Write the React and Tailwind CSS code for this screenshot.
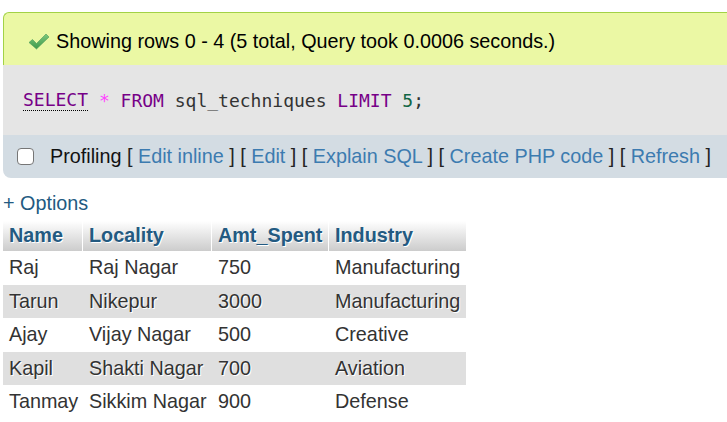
import { useState } from "react";

const rows = [
  ["Raj", "Raj Nagar", "750", "Manufacturing"],
  ["Tarun", "Nikepur", "3000", "Manufacturing"],
  ["Ajay", "Vijay Nagar", "500", "Creative"],
  ["Kapil", "Shakti Nagar", "700", "Aviation"],
  ["Tanmay", "Sikkim Nagar", "900", "Defense"],
];

const widths = ["w-[80px]", "w-[129px]", "w-[117px]", "w-[137px]"];

const CheckIcon = () => (
  <svg width="22" height="17" viewBox="0 0 22 17">
    <defs>
      <linearGradient id="ok" x1="0" y1="0" x2="0" y2="1">
        <stop offset="0" stopColor="#7cc87c" />
        <stop offset="1" stopColor="#3f9a4a" />
      </linearGradient>
    </defs>
    <path
      d="M1 9.5 L4.5 6.5 L8.5 10.5 L18 1 L21 4 L8.5 16 Z"
      fill="url(#ok)"
      stroke="#4a9a55"
      strokeWidth="0.6"
      strokeLinejoin="round"
    />
  </svg>
);

const Bracket = ({ children }) => (
  <span className="text-[#222]">{children}</span>
);

const Link = ({ children }) => (
  <a href="#" className="text-[#3c7bb0]">
    {children}
  </a>
);

export default function App() {
  const [profiling, setProfiling] = useState(false);

  return (
    <div className="w-[727px] h-[422px] overflow-hidden bg-white font-['Liberation_Sans',Arial,sans-serif] text-[19.8px] text-[#111]">
      <div className="pt-[12px] pl-[3px] w-[760px]">
        {/* Success message */}
        <div className="h-[53px] flex items-center pl-[24px] pt-[4px] bg-[#ebf8a4] border-t border-l border-[#a2d246] rounded-tl-[6px]">
          <CheckIcon />
          <span className="ml-[6px] leading-[22px] text-black">
            Showing rows 0 - 4 (5 total, Query took 0.0006 seconds.)
          </span>
        </div>

        {/* SQL box */}
        <div className="h-[70px] flex items-center pl-[20px] bg-[#e5e5e5] font-['DejaVu_Sans_Mono',monospace] text-[18px]">
          <span className="text-[#770088] border-b border-dotted border-black leading-[20px]">SELECT</span>
          <span className="whitespace-pre"> </span>
          <span className="text-[#ff44ff]">*</span>
          <span className="whitespace-pre"> </span>
          <span className="text-[#770088]">FROM</span>
          <span className="whitespace-pre text-[#333]"> sql_techniques </span>
          <span className="text-[#770088]">LIMIT</span>
          <span className="whitespace-pre"> </span>
          <span className="text-[#116644]">5</span>
          <span className="text-[#333]">;</span>
        </div>

        {/* Profiling bar */}
        <div className="h-[43px] flex items-center pl-[14px] bg-[#d3dce3] rounded-bl-[8px]">
          <input
            type="checkbox"
            checked={profiling}
            onChange={(e) => setProfiling(e.target.checked)}
            className="appearance-none w-[17px] h-[17px] rounded-[4px] border border-[#767676] bg-white"
          />
          <span className="ml-[16px] whitespace-pre">
            Profiling <Bracket>[</Bracket> <Link>Edit inline</Link> <Bracket>]</Bracket>{" "}
            <Bracket>[</Bracket> <Link>Edit</Link> <Bracket>]</Bracket>{" "}
            <Bracket>[</Bracket> <Link>Explain SQL</Link> <Bracket>]</Bracket>{" "}
            <Bracket>[</Bracket> <Link>Create PHP code</Link> <Bracket>]</Bracket>{" "}
            <Bracket>[</Bracket> <Link>Refresh</Link> <Bracket>]</Bracket>
          </span>
        </div>

        {/* Options */}
        <div className="mt-[14px] leading-[22px] text-[#235a81]">+ Options</div>

        {/* Results table */}
        <div className="mt-[7px] w-[463px] text-[#333]">
          <div className="flex h-[30px] bg-gradient-to-b from-white to-[#cccccc] font-bold text-[#235a81] [text-shadow:1px_1px_0_#fff]">
            {["Name", "Locality", "Amt_Spent", "Industry"].map((h, i) => (
              <div
                key={h}
                className={`${widths[i]} flex items-center pl-[6px] whitespace-nowrap ${i < 3 ? "border-r border-white" : ""}`}
              >
                {h}
              </div>
            ))}
          </div>
          {rows.map((r, ri) => (
            <div
              key={ri}
              className={`flex h-[33.6px] ${ri % 2 === 1 ? "bg-[#dfdfdf]" : "bg-white"}`}
            >
              {r.map((c, i) => (
                <div
                  key={i}
                  className={`${widths[i]} flex items-center pl-[6px] whitespace-nowrap [text-shadow:1px_1px_0_#fff]`}
                >
                  {c}
                </div>
              ))}
            </div>
          ))}
        </div>
      </div>
    </div>
  );
}
